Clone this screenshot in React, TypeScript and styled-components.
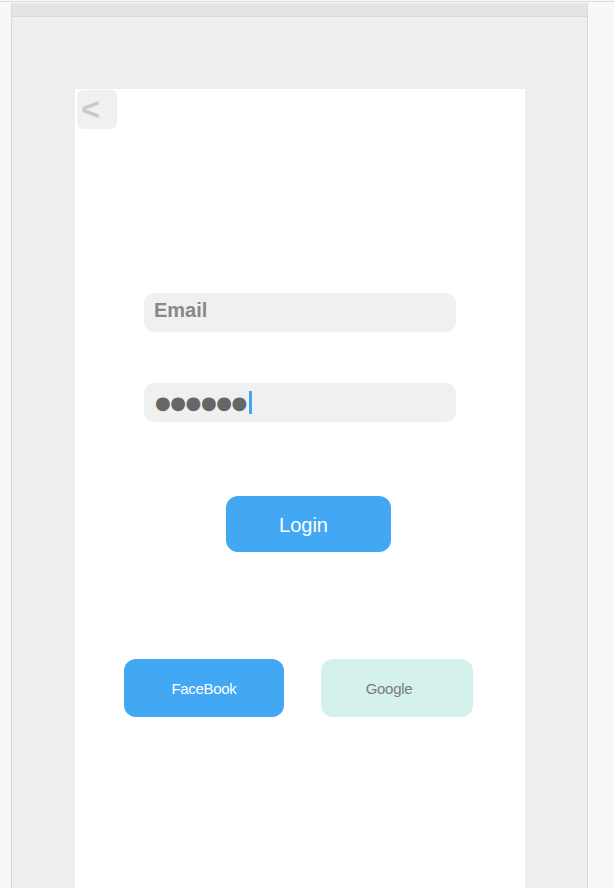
import React from "react";
import styled, { createGlobalStyle } from "styled-components";

const Global = createGlobalStyle`
  html, body { margin: 0; padding: 0; background: #f8f8f8; }
  body { font-family: "Liberation Sans", Arial, sans-serif; overflow: hidden; }
`;

const Page = styled.div`
  padding-top: 1px;
  height: 888px;
  box-sizing: border-box;
  overflow: hidden;
`;

const TopRule = styled.div`
  height: 1px;
  background: #dcdcdc;
  margin-bottom: 1px;
`;

const Frame = styled.div`
  margin-left: 11px;
  width: 577px;
  box-sizing: border-box;
  border-left: 1px solid #dadada;
  border-right: 1px solid #dadada;
  background: #eeeeee;
  height: 900px;
`;

const Header = styled.div`
  height: 12px;
  background: #e4e4e4;
  border-top: 1px solid #e8e8e8;
  border-bottom: 1px solid #d9d9d9;
`;

const Stage = styled.div`
  padding: 72px 0 0 63px;
`;

const Card = styled.div`
  width: 450px;
  min-height: 820px;
  background: #ffffff;
  display: flex;
  flex-direction: column;
  align-items: flex-start;
`;

const BackButton = styled.button`
  margin: 1px 0 0 2px;
  width: 40px;
  height: 39px;
  border: none;
  border-radius: 6px;
  background: #f0f0f0;
  color: #c9c9c9;
  font-family: "Liberation Sans", Arial, sans-serif;
  font-weight: bold;
  font-size: 32px;
  line-height: 1;
  padding: 0 13px 1px 0;
  display: flex;
  align-items: center;
  justify-content: center;
  cursor: pointer;
`;

const Field = styled.div<{ $top: number }>`
  margin: ${(p) => p.$top}px 0 0 69px;
  width: 312px;
  height: 39px;
  border-radius: 10px;
  background: #f0f0f0;
  display: flex;
  align-items: center;
  padding-left: 10px;
  box-sizing: border-box;
`;

const Placeholder = styled.span`
  font-weight: bold;
  font-size: 20px;
  color: #888888;
  margin-top: -4px;
`;

const Dots = styled.span`
  font-family: "DejaVu Sans", sans-serif;
  font-size: 18px;
  line-height: 1;
  color: #666666;
  letter-spacing: -0.4px;
  margin-left: 1px;
`;

const Caret = styled.span`
  display: inline-block;
  width: 3px;
  height: 23px;
  background: #42a5ef;
  margin-left: 2px;
`;

const LoginButton = styled.button`
  margin: 74px 0 0 151px;
  width: 165px;
  height: 56px;
  border: none;
  border-radius: 12px;
  background: #42a8f4;
  color: #ffffff;
  font-family: "Liberation Sans", Arial, sans-serif;
  font-size: 20px;
  padding: 3px 10px 0 0;
  cursor: pointer;
`;

const SocialRow = styled.div`
  margin: 107px 0 0 49px;
  display: flex;
  gap: 37px;
`;

const SocialButton = styled.button<{ $w: number; $bg: string; $fg: string; $shift: number }>`
  width: ${(p) => p.$w}px;
  height: 58px;
  border: none;
  border-radius: 12px;
  background: ${(p) => p.$bg};
  color: ${(p) => p.$fg};
  font-family: "Liberation Sans", Arial, sans-serif;
  font-size: 15px;
  letter-spacing: -0.3px;
  padding: 0 ${(p) => p.$shift}px 0 0;
  cursor: pointer;
`;

export default function App() {
  return (
    <>
      <Global />
      <Page>
        <TopRule />
        <Frame>
          <Header />
          <Stage>
            <Card>
              <BackButton aria-label="Back">&lt;</BackButton>
              <Field $top={164}>
                <Placeholder>Email</Placeholder>
              </Field>
              <Field $top={51}>
                <Dots>●●●●●●</Dots>
                <Caret />
              </Field>
              <LoginButton>Login</LoginButton>
              <SocialRow>
                <SocialButton $w={160} $bg="#42a8f4" $fg="#ffffff" $shift={0}>
                  FaceBook
                </SocialButton>
                <SocialButton $w={152} $bg="#d5f1ec" $fg="#7a7a7a" $shift={16}>
                  Google
                </SocialButton>
              </SocialRow>
            </Card>
          </Stage>
        </Frame>
      </Page>
    </>
  );
}
